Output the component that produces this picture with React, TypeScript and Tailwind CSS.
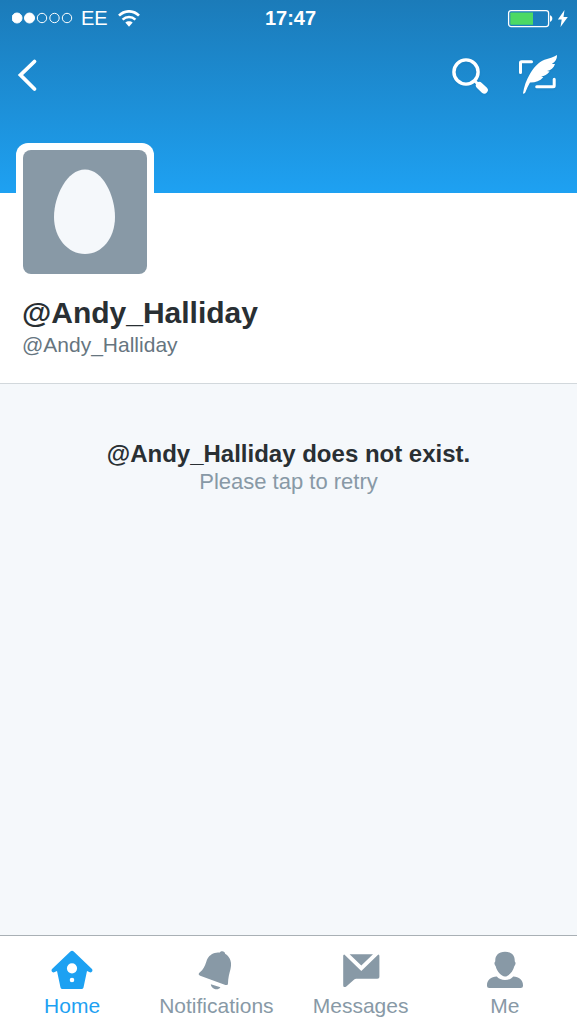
import React from 'react';

function StatusBar() {
  return (
    <div className="grid h-9 grid-cols-3 items-center pr-2 pl-3 text-[20px] leading-6">
      <div className="flex items-center gap-2">
        <svg className="h-3 w-[61px]" viewBox="0 0 61 12" role="img" aria-label="Signal: two of five">
          <g fill="white" stroke="white">
            <circle cx="5" cy="6" r="5" />
            <circle cx="17.5" cy="6" r="5" />
            <circle cx="30" cy="6" r="4.7" fill="none" />
            <circle cx="42.5" cy="6" r="4.7" fill="none" />
            <circle cx="55" cy="6" r="4.7" fill="none" />
          </g>
        </svg>
        <span>EE</span>
        <svg className="h-[17px] w-[26px]" viewBox="0 0 26 17" role="img" aria-label="Wi-Fi">
          <g transform="translate(2 0)">
            <path d="M1 5.6C6.7-.1 15.3-.1 21 5.6" fill="none" stroke="white" strokeWidth="2.7" />
            <path d="M4.6 9.7c3.7-3.6 9.1-3.6 12.8 0" fill="none" stroke="white" strokeWidth="2.5" />
            <path d="m11 16.8-3.7-4.2c2-1.7 5.4-1.7 7.4 0Z" fill="white" />
          </g>
        </svg>
      </div>
      <time className="text-center font-bold">17:47</time>
      <svg className="h-5 w-[62px] justify-self-end" viewBox="0 0 62 20" role="img" aria-label="Battery charging">
        <rect x="1.6" y="2.6" width="40" height="16" rx="2.5" fill="none" stroke="white" strokeWidth="1.3" />
        <path d="M4 4.5h22v12.2H4a.7.7 0 0 1-.7-.7V5.2c0-.4.3-.7.7-.7Z" fill="#4cd964" />
        <path d="M43 7.3c3.1 1 3.1 5.6 0 6.6Z" fill="white" />
        <path d="m57.5 2-6.6 9.5h3.8L53.5 19l7.3-10h-4.3Z" fill="white" />
      </svg>
    </div>
  );
}

function Header() {
  return (
    <header className="bg-gradient-to-b from-[#1b7bb9] to-[#1ea1f2] pb-20 text-white">
      <StatusBar />
      <div className="flex h-[77px] items-center justify-between px-4">
        <button type="button" aria-label="Back">
          <svg className="h-9 w-6" viewBox="0 0 24 36">
            <path d="M18.5 4.5 4.5 18l14 14" fill="none" stroke="white" strokeWidth="3.8" strokeLinecap="round" strokeLinejoin="miter" />
          </svg>
        </button>
        <div className="flex items-center gap-7">
          <button type="button" aria-label="Search">
            <svg className="h-10 w-10 drop-shadow-xs" viewBox="0 0 40 40">
              <circle cx="17" cy="17" r="12.1" fill="none" stroke="white" strokeWidth="3.4" />
              <path d="m25.4 25.5 3.2 3.2" stroke="white" strokeWidth="3" />
              <path d="m30.4 30.5 4.9 4.6" stroke="white" strokeWidth="7" strokeLinecap="round" />
            </svg>
          </button>
          <button type="button" aria-label="Compose tweet">
            <svg className="h-11 w-11 drop-shadow-xs" viewBox="0 0 44 44">
              <path d="M3.5 19.5V9.8c0-.6.4-1 1-1h10M19.7 33.8h16.5c.6 0 1-.4 1-1v-6.6" fill="none" stroke="white" strokeWidth="3" strokeLinecap="round" strokeLinejoin="round" />
              <path d="M6 40.2C7 33.5 9.5 26.5 13.2 20.5 17 14.2 21.5 9.2 27.5 6.8 32 5.2 36.5 4.6 40 2c.2 3.6-1.4 6.8-5.2 9.1l3.2-.2c-1.2 3.9-4.3 6.3-8 7.2l2.6.5c-2.2 3.2-5.4 4.5-8.4 4.9l2.1.8c-3.6 3.8-7.7 5.4-13.3 5.3-1.9 3.2-3.2 6.5-4.6 9.7-.5 1.4-2.5 2-2.4.9Z" fill="white" />
            </svg>
          </button>
        </div>
      </div>
    </header>
  );
}

function Profile() {
  return (
    <section className="border-b border-[#d2d8dc] bg-white px-4 pb-6">
      <div className="relative -mt-[50px] w-fit rounded-xl bg-white p-[7px]">
        <svg className="h-[124px] w-[124px] rounded-lg bg-[#8899a6]" viewBox="0 0 124 124" role="img" aria-label="Default profile picture">
          <path d="M62 19.5C80 19.5 92 46 92 67S79 104 62 104 31 88 31 67 44 19.5 62 19.5Z" fill="#f5f8fb" />
        </svg>
      </div>
      <div className="px-[6px] pt-[14px]">
        <h1 className="text-[30px] leading-9 font-bold text-[#292f33]">@Andy_Halliday</h1>
        <p className="text-[21px] leading-7 text-[#66757f]">@Andy_Halliday</p>
      </div>
    </section>
  );
}

function HomeIcon() {
  return (
    <svg className="h-11 w-11" viewBox="0 0 44 44" fill="currentColor" aria-hidden="true">
      <path fillRule="evenodd" d="M20.4 3.6a2.4 2.4 0 0 1 3.3 0l18 17.2c2 2-.4 4.7-2.5 3.1l-2.2-1-3.4 16c-.3 1.5-.9 2.1-2.4 2.1H12.8c-1.5 0-2.1-.6-2.4-2.1L7 22.9l-2.2 1c-2.1 1.6-4.5-1.1-2.5-3.1ZM22 15.2a5.1 5.1 0 1 0 0 10.2 5.1 5.1 0 0 0 0-10.2Zm0 14.5a2.3 2.3 0 1 0 0 4.6 2.3 2.3 0 0 0 0-4.6Z" />
    </svg>
  );
}

function BellIcon() {
  return (
    <svg className="h-11 w-11" viewBox="0 0 44 44" fill="currentColor" aria-hidden="true">
      <path d="M20.7 5c1.6-.6 3.4-.8 5.2-.4.7-2.2 5.3-1.8 5.2 1.1 5.5 3.3 7.1 9.2 5.3 15.7-1 3.7-2.3 8.5-2.4 13.8 0 1.6-1 2.2-2.6 1.7L6.2 27.7c-2-.7-2-2.4-.3-3.5 3.3-2.2 4.9-6.2 6.4-10.5C13.9 9 16.2 6.4 20.7 5ZM16.8 36.2l9.6 3.1c-2.4 3.7-8.9 2.1-9.6-3.1Z" />
    </svg>
  );
}

function MessageIcon() {
  return (
    <svg className="h-11 w-11" viewBox="0 0 44 44" fill="currentColor" aria-hidden="true">
      <path d="M10.6 6.2h23.4L22.3 17.4ZM4.2 8.2c0-.8.4-1.4 1.1-1.6l17 16.4 17-16.4c.7.2 1.1.8 1.1 1.6v20.3c0 1.5-.7 2.2-2.2 2.2H17.1c-.8 0-1.3.2-1.9.7l-7.9 7c-1.6 1.3-3.1.7-3.1-1.2Z" />
    </svg>
  );
}

function PersonIcon() {
  return (
    <svg className="h-11 w-11" viewBox="0 0 44 44" fill="currentColor" aria-hidden="true">
      <path d="M22 3.7c7 0 10.1 4.5 9.7 9.6 1.5 1.4.8 3.7-.4 5-1.2 5.1-5.6 10.2-9.3 10.2s-8.1-5.1-9.3-10.2c-1.2-1.3-1.9-3.6-.4-5C11.9 8.2 15 3.7 22 3.7ZM13.8 28.6c3.2 4.6 13.2 4.6 16.4 0 5.9.4 9.9 3.4 9.8 8.9 0 1.7-.8 2.5-2.4 2.5H6.4C4.8 40 4 39.2 4 37.5c-.1-5.5 3.9-8.5 9.8-8.9Z" />
    </svg>
  );
}

const tabs = [
  { label: 'Home', Icon: HomeIcon, active: true },
  { label: 'Notifications', Icon: BellIcon, active: false },
  { label: 'Messages', Icon: MessageIcon, active: false },
  { label: 'Me', Icon: PersonIcon, active: false },
];

export default function App() {
  return (
    <div className="flex min-h-screen flex-col bg-[#f5f8fb] font-['Liberation_Sans',Arial,sans-serif]">
      <Header />
      <Profile />
      <main className="flex-1 pt-14">
        <button type="button" className="block w-full text-center">
          <span className="block text-[24px] leading-7 font-bold text-[#292f33]">@Andy_Halliday does not exist.</span>
          <span className="block text-[22px] leading-7 text-[#8899a6]">Please tap to retry</span>
        </button>
      </main>
      <nav aria-label="Main" className="grid grid-cols-4 border-t border-[#a9b0b5] bg-white pt-3 pb-1">
        {tabs.map(({ label, Icon, active }) => (
          <a
            key={label}
            href="#"
            aria-current={active ? 'page' : undefined}
            className={active ? 'flex flex-col items-center text-[#1da1f2]' : 'flex flex-col items-center text-[#8899a6]'}
          >
            <Icon />
            <span className="text-[21px] leading-7">{label}</span>
          </a>
        ))}
      </nav>
    </div>
  );
}
